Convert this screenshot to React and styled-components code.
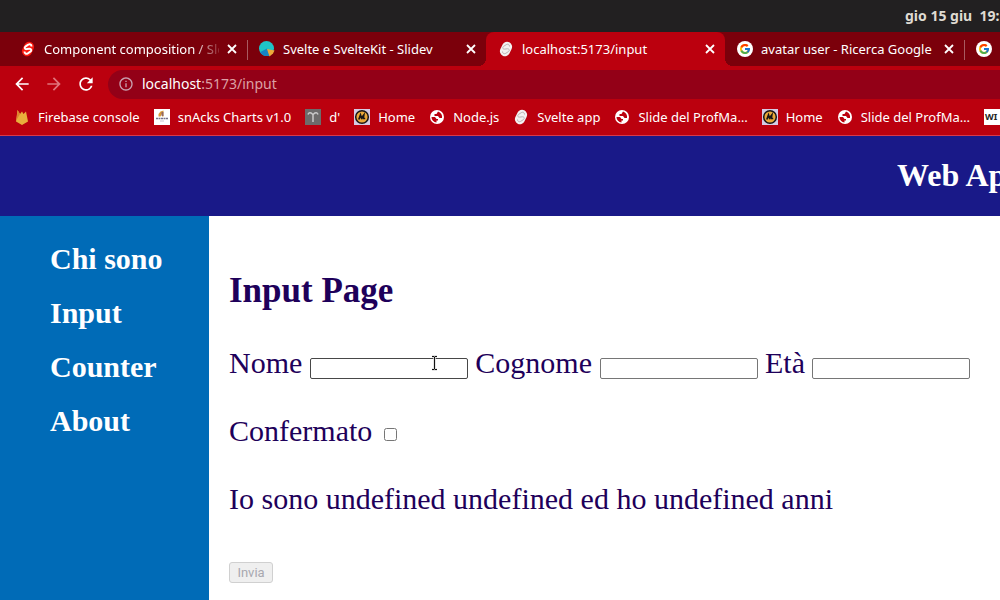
import React from "react";
import styled, { createGlobalStyle, css } from "styled-components";
import { FcGoogle } from "react-icons/fc";
import { MdArrowBack, MdArrowForward, MdRefresh, MdInfoOutline } from "react-icons/md";

const GlobalStyle = createGlobalStyle`
  *, *::before, *::after { box-sizing: border-box; }
  body { margin: 0; overflow: hidden; background: #fff; }
  button, input { font: inherit; }
`;

const uiFont = css`
  font-family: "Noto Sans", "Open Sans", sans-serif;
`;

const Screen = styled.div`
  display: flex;
  flex-direction: column;
  min-height: 100vh;
  overflow: hidden;
`;

const SystemBar = styled.div`
  ${uiFont}
  display: flex;
  justify-content: flex-end;
  height: 32px;
  background: #222021;
  color: #dfdbd2;
  font-size: 14px;
  font-weight: 700;
  line-height: 32px;
  white-space: pre;
`;

const Clock = styled.time`
  width: 95px;
  overflow: hidden;
`;

const Chrome = styled.div`
  ${uiFont}
  background: #bb000e;
  border-bottom: 1px solid #d8384a;
  color: #fff;
  font-size: 13px;
`;

const TabStrip = styled.div`
  display: flex;
  height: 34px;
  padding-left: 8px;
  background: #7b000b;
  overflow: hidden;
`;

const Tab = styled.div`
  position: relative;
  flex: 0 0 239px;
  min-width: 0;
  display: flex;
  align-items: center;
  gap: 8px;
  padding: 0 10px 0 12px;
  border-radius: 8px 8px 0 0;
  background: ${(p) => (p.$active ? "#bb000e" : "transparent")};

  ${(p) =>
    p.$active &&
    css`
      &::before,
      &::after {
        content: "";
        position: absolute;
        bottom: 0;
        width: 8px;
        height: 8px;
      }
      &::before {
        right: 100%;
        background: radial-gradient(circle at 0 0, transparent 8px, #bb000e 8px);
      }
      &::after {
        left: 100%;
        background: radial-gradient(circle at 100% 0, transparent 8px, #bb000e 8px);
      }
    `}
`;

const Divider = styled.span`
  position: absolute;
  right: -1px;
  top: 8px;
  width: 1px;
  height: 20px;
  background: #a85a60;
`;

const TabTitle = styled.span`
  flex: 1;
  min-width: 0;
  overflow: hidden;
  white-space: nowrap;
  ${(p) => p.$fade && css`mask-image: linear-gradient(to right, #000 148px, transparent 180px);`}
`;

const IconButton = styled.button`
  display: flex;
  padding: 0;
  border: 0;
  background: none;
  color: ${(p) => (p.$dim ? "#e0747c" : "#fff")};
`;

const Toolbar = styled.div`
  display: flex;
  align-items: center;
  gap: 12px;
  height: 36px;
  padding-left: 12px;
`;

const AddressBar = styled.div`
  flex: 1;
  display: flex;
  align-items: center;
  gap: 8px;
  height: 29px;
  padding-left: 10px;
  border-radius: 15px 0 0 15px;
  background: #930017;
  color: #dca0a4;
  font-size: 14px;
  line-height: 18px;

  b { color: #fff; font-weight: 400; }
`;

const Bookmarks = styled.nav`
  display: flex;
  align-items: center;
  height: 33px;
  padding: 0 0 3px 14px;
  gap: 14px;
  overflow: hidden;
`;

const Bookmark = styled.a`
  flex: none;
  display: flex;
  align-items: center;
  gap: 8px;
  color: #fff;
  text-decoration: none;
  white-space: nowrap;
`;

const Svg = styled.svg`
  flex: none;
  display: block;
`;

const GoogleBadge = styled.span`
  display: flex;
  flex: none;
  width: 16px;
  height: 16px;
  padding: 2px;
  border-radius: 50%;
  background: #fff;
`;

const Header = styled.header`
  display: flex;
  align-items: center;
  justify-content: flex-end;
  height: 80px;
  padding-bottom: 2px;
  background: #191988;
  color: #fff;
  font-family: "Liberation Serif", serif;
`;

const SiteTitle = styled.h1`
  width: 103px;
  margin: 0;
  overflow: hidden;
  font-size: 32px;
  line-height: 36px;
  white-space: nowrap;
`;

const Body = styled.div`
  flex: 1;
  display: flex;
  font-family: "Liberation Serif", serif;
  font-size: 30px;
  line-height: 34px;
`;

const Sidebar = styled.nav`
  flex: 0 0 209px;
  display: flex;
  flex-direction: column;
  gap: 20px;
  padding: 26px 0 0 50px;
  background: #006bb7;
`;

const SideLink = styled.a`
  color: #fff;
  font-weight: 700;
  text-decoration: none;
`;

const Main = styled.main`
  flex: 1;
  min-width: 0;
  padding: 55px 20px 0;
  background: #fff;
  color: #1e005a;
`;

const PageTitle = styled.h2`
  margin: 0 0 35px;
  font-size: 35px;
  line-height: 40px;
`;

const Form = styled.form`
  display: flex;
  flex-direction: column;
  align-items: flex-start;
  gap: 34px;
`;

const Line = styled.div`
  white-space: nowrap;
`;

const TextInput = styled.input`
  width: 158px;
  height: 21px;
  padding: 1px 2px;
  border: 1px solid ${(p) => (p.$hovered ? "#474747" : "#767676")};
  border-radius: 2px;
  background: #fff;
  font: 13px/15px "Liberation Sans", sans-serif;
`;

const Check = styled.input`
  width: 13px;
  height: 13px;
  margin: 3px 3px 3px 4px;
`;

const Message = styled.p`
  margin: 0;
`;

const Submit = styled.button`
  min-width: 44px;
  height: 21px;
  margin-top: 12px;
  padding: 0 6px;
  border: 1px solid #d0d0d0;
  border-radius: 3px;
  background: #efefef;
  color: #a8a8b0;
  font: 13px/17px Roboto, sans-serif;
`;

const Pointer = styled.svg`
  position: absolute;
  left: 430px;
  top: 354px;
`;

function CloseIcon() {
  return (
    <Svg width="10" height="10" viewBox="0 0 10 10">
      <path d="m1 1 8 8M9 1 1 9" stroke="currentColor" strokeWidth="1.800" />
    </Svg>
  );
}

function SvelteIcon({ shell, letter, weight }) {
  return (
    <Svg width="16" height="16" viewBox="0 0 16 16">
      <rect x="3" y="0.500" width="10" height="15" rx="5" fill={shell} transform="rotate(26 8 8)" />
      <path
        d="M11.500 5.500C11.500 3 9.500 2.800 8.200 3.700L5.700 5.300C4 6.500 4.800 8.400 6.700 8.100L9.300 7.800C11.300 7.600 12 9.500 10.300 10.700L7.800 12.300C6.300 13.200 4.500 12.700 4.500 10.500"
        fill="none"
        stroke={letter}
        strokeWidth={weight}
      />
    </Svg>
  );
}

function Favicon({ kind }) {
  switch (kind) {
    case "svelteRed":
      return <SvelteIcon shell="#fb1a10" letter="#fff" weight="2" />;
    case "svelte":
      return <SvelteIcon shell="#f3f1f1" letter="#b9b4b4" weight="1" />;
    case "google":
      return <GoogleBadge><FcGoogle size={12} /></GoogleBadge>;
    case "slidev":
      return (
        <Svg width="16" height="16" viewBox="0 0 16 16">
          <circle cx="7.500" cy="7.500" r="7.500" fill="#1fc4c8" />
          <path d="M8 7.500 1 11.300A7.500 7.500 0 0 0 11 14z" fill="#1684c4" />
          <path d="M8 8 15.500 9.500 14 12.500l-3.500 3z" fill="#edaa3b" />
        </Svg>
      );
    case "firebase":
      return (
        <Svg width="16" height="16" viewBox="0 0 16 16">
          <path d="M2 12.500 3.500 1l2.500 4L8 2.500 9.500 5l2.500-2.500L14 12.500 8 16z" fill="#e9ae3c" />
          <path d="M2.500 11 3.500 1 6 5z" fill="#dc8431" />
        </Svg>
      );
    case "snacks":
      return (
        <Svg width="16" height="16" viewBox="0 0 16 16">
          <path d="M0 0h16v16H0z" fill="#fff" />
          <path d="m4.500 5 2-2.500 3-1v6H8V5L6.500 7.500h-2z" fill="#d99a38" />
          <path d="M7.500 3h2v4h-2z" fill="#765171" opacity=".7" />
          <path d="M2 9.500h12" stroke="#77728a" strokeWidth="1.500" strokeDasharray="2 .5" />
          <path d="M6 12h4" stroke="#c8c5cf" />
        </Svg>
      );
    case "column":
      return (
        <Svg width="16" height="16" viewBox="0 0 16 16">
          <path d="M0 0h16v16H0z" fill="#6d6b6b" />
          <path d="M3 5.500Q4 3 6 4l2 1.500L10 4q2-1 3 1.500M8 5v8" fill="none" stroke="#c9c9c9" strokeWidth="1.500" />
        </Svg>
      );
    case "home":
      return (
        <Svg width="16" height="16" viewBox="0 0 16 16">
          <path d="M0 0h16v16H0z" fill="#d6cce4" />
          <circle cx="8" cy="8" r="6.300" fill="#eaa83a" stroke="#181516" strokeWidth="1.500" />
          <path d="m4.800 10.500 1.700-4.500 1 3L9.800 6l-.5 3.500h1.900" fill="none" stroke="#181516" strokeWidth="1.700" />
        </Svg>
      );
    case "globe":
      return (
        <Svg width="16" height="16" viewBox="0 0 16 16">
          <circle cx="8" cy="8" r="7" fill="#fff" />
          <path d="M9 2.500 7.500 5H5.500v2H9l1.500 2H13A5.500 5.500 0 0 0 9 2.500zM2.500 8H6l1.500 2H9v1.500H7.500v2A5.500 5.500 0 0 1 2.500 8z" fill="#bb000e" />
        </Svg>
      );
    default:
      return (
        <Svg width="16" height="16" viewBox="0 0 16 16">
          <path d="M0 0h16v16H0z" fill="#fff" />
          <text x="1" y="11" fill="#222" fontSize="9" fontWeight="700">WI</text>
        </Svg>
      );
  }
}

const tabs = [
  { icon: "svelteRed", title: "Component composition / Slots", fade: true, divided: true },
  { icon: "slidev", title: "Svelte e SvelteKit - Slidev" },
  { icon: "svelte", title: "localhost:5173/input", active: true },
  { icon: "google", title: "avatar user - Ricerca Google", divided: true },
  { icon: "google", title: "" },
];

const bookmarks = [
  ["firebase", "Firebase console"],
  ["snacks", "snAcks Charts v1.0"],
  ["column", "d'"],
  ["home", "Home"],
  ["globe", "Node.js"],
  ["svelte", "Svelte app"],
  ["globe", "Slide del ProfMa…"],
  ["home", "Home"],
  ["globe", "Slide del ProfMa…"],
  ["wiki", ""],
];

export default function App() {
  return (
    <Screen>
      <GlobalStyle />
      <SystemBar><Clock>gio 15 giu  19:</Clock></SystemBar>
      <Chrome>
        <TabStrip>
          {tabs.map((t, i) => (
            <Tab key={i} $active={t.active}>
              <Favicon kind={t.icon} />
              <TabTitle $fade={t.fade}>{t.title}</TabTitle>
              <IconButton aria-label="Chiudi scheda"><CloseIcon /></IconButton>
              {t.divided && <Divider />}
            </Tab>
          ))}
        </TabStrip>
        <Toolbar>
          <IconButton aria-label="Indietro"><MdArrowBack size={20} /></IconButton>
          <IconButton aria-label="Avanti" $dim><MdArrowForward size={20} /></IconButton>
          <IconButton aria-label="Ricarica"><MdRefresh size={20} /></IconButton>
          <AddressBar>
            <MdInfoOutline size={16} color="#c9a0b0" />
            <span><b>localhost</b>:5173/input</span>
          </AddressBar>
        </Toolbar>
        <Bookmarks aria-label="Preferiti">
          {bookmarks.map(([icon, label], i) => (
            <Bookmark key={i} href="#"><Favicon kind={icon} />{label}</Bookmark>
          ))}
        </Bookmarks>
      </Chrome>
      <Header><SiteTitle>Web App</SiteTitle></Header>
      <Body>
        <Sidebar>
          {["Chi sono", "Input", "Counter", "About"].map((label) => (
            <SideLink key={label} href="#">{label}</SideLink>
          ))}
        </Sidebar>
        <Main>
          <PageTitle>Input Page</PageTitle>
          <Form>
            <Line>
              <label htmlFor="nome">Nome</label> <TextInput id="nome" $hovered />{" "}
              <label htmlFor="cognome">Cognome</label> <TextInput id="cognome" />{" "}
              <label htmlFor="eta">Età</label> <TextInput id="eta" />
            </Line>
            <Line>
              <label htmlFor="confermato">Confermato</label> <Check id="confermato" type="checkbox" />
            </Line>
            <Message>Io sono undefined undefined ed ho undefined anni</Message>
            <Submit type="submit" disabled>Invia</Submit>
          </Form>
        </Main>
      </Body>
      <Pointer width="10" height="18" viewBox="0 0 10 18" aria-hidden="true">
        <path d="M2 2.500h2l.5 1 .5-1h2M4.500 3v12M2 15.500h2l.5-1 .5 1h2" fill="none" stroke="#ddd" strokeWidth="2.500" />
        <path d="M2 2.500h2l.5 1 .5-1h2M4.500 3v12M2 15.500h2l.5-1 .5 1h2" fill="none" stroke="#111" />
      </Pointer>
    </Screen>
  );
}
